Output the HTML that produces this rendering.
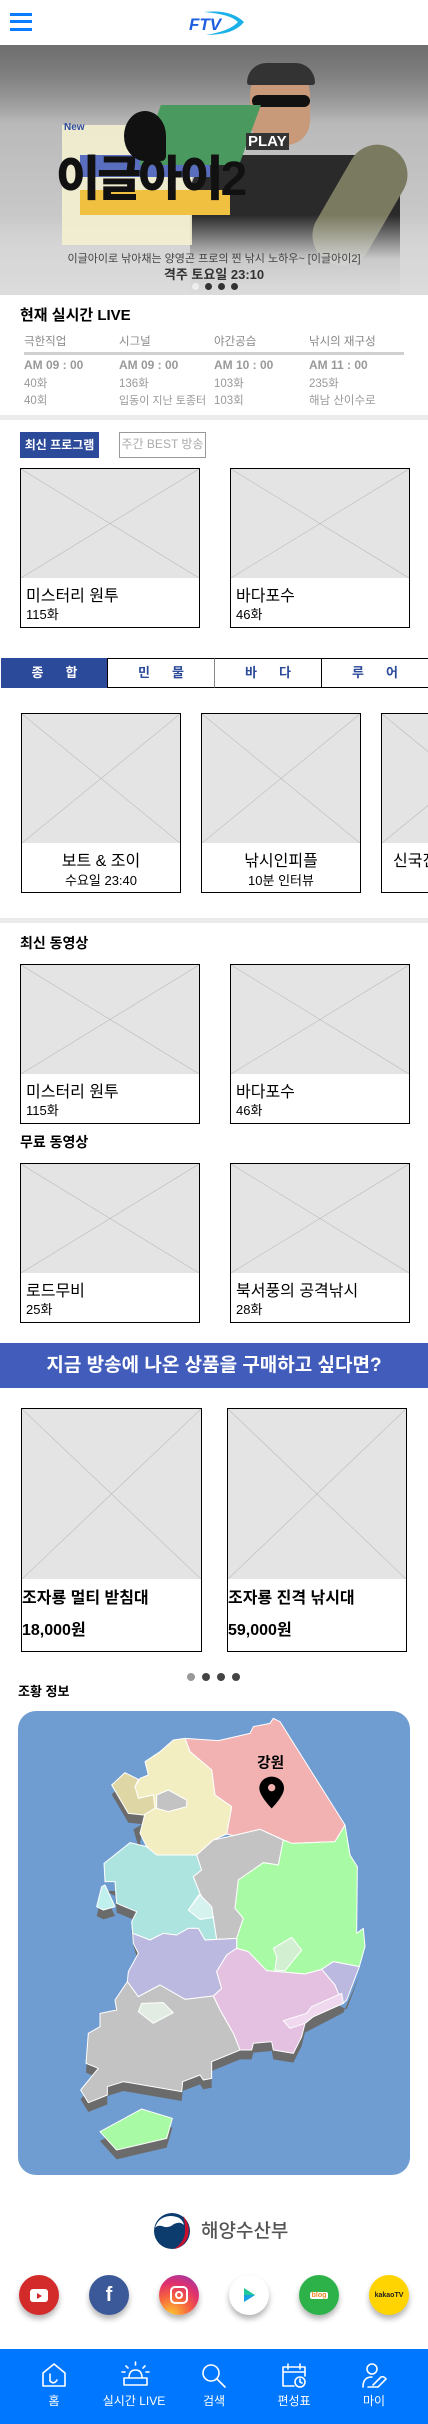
<!DOCTYPE html>
<html lang="ko"><head><meta charset="utf-8">
<style>
*{margin:0;padding:0;box-sizing:border-box}
html,body{width:428px;height:2424px;overflow:hidden}
body{position:relative;background:#fff;font-family:"Liberation Sans","Noto Sans CJK KR",sans-serif;color:#000}
#w{position:absolute;left:0;top:0;width:428px;height:2424px;overflow:hidden}
.a{position:absolute}
.card{position:absolute;border:1.5px solid #000;background:#fff;overflow:hidden}
.ph{position:absolute;left:0;top:0;right:0;background:#e4e4e4}
.ph svg{width:100%;height:100%;display:block}
.t1{position:absolute;font-size:16px;white-space:nowrap}
.t2{position:absolute;font-size:13px;white-space:nowrap}
.sec{position:absolute;font-size:14px;font-weight:bold;white-space:nowrap}
.tab{position:absolute;top:658px;height:30px;border:1.5px solid #000;font-size:13px;font-weight:bold;color:#2c4a9a;text-align:center;line-height:27px;letter-spacing:22px;text-indent:22px}
.lh{position:absolute;font-size:11.5px;color:#888;white-space:nowrap}
.lt{position:absolute;font-size:12px;font-weight:bold;color:#999;white-space:nowrap}
.lr{position:absolute;font-size:11.5px;color:#999;white-space:nowrap}
.soc{position:absolute;top:2275px;width:40px;height:40px;border-radius:50%;box-shadow:0 4px 6px rgba(0,0,0,.3);display:flex;align-items:center;justify-content:center}
.nav{position:absolute;top:2392px;font-size:12px;color:#fff;text-align:center;width:80px;white-space:nowrap}
</style></head><body><div id="w">

<!-- header -->
<div class="a" style="left:10px;top:13px;width:22px;height:3px;background:#0a7cff"></div>
<div class="a" style="left:10px;top:20px;width:22px;height:3px;background:#0a7cff"></div>
<div class="a" style="left:10px;top:28px;width:22px;height:3px;background:#0a7cff"></div>
<svg class="a" style="left:186px;top:9px" width="60" height="28" viewBox="0 0 60 28">
<path d="M18 3 Q45 0 58 13 Q48 26 20 26 Q44 22 52 13 Q44 5 18 3Z" fill="#1ab0e8"/>
<text x="3" y="21" font-family="Liberation Sans" font-weight="bold" font-style="italic" font-size="17" fill="#1d5fe0">FTV</text>
</svg>

<!-- hero -->
<div class="a" style="left:0;top:45px;width:428px;height:250px;background:linear-gradient(180deg,#8a8a8a 0%,#b9b9b9 30%,#c9c9c9 70%,#e0e0e0 100%);overflow:hidden">
<div class="a" style="left:0;top:0;width:428px;height:80px;background:linear-gradient(180deg,#6f6f6f,rgba(180,180,180,0))"></div>
<div class="a" style="left:190px;top:110px;width:210px;height:140px;background:#2a2a2a;border-radius:40px 40px 0 0"></div>
<div class="a" style="left:250px;top:20px;width:60px;height:80px;background:#c89a7a;border-radius:30px 30px 24px 24px"></div>
<div class="a" style="left:247px;top:18px;width:68px;height:22px;background:#333;border-radius:30px 30px 4px 4px"></div>
<div class="a" style="left:252px;top:50px;width:58px;height:12px;background:#111;border-radius:6px"></div>
<div class="a" style="left:330px;top:95px;width:60px;height:130px;background:#7a7a60;border-radius:30px;transform:rotate(30deg)"></div>
<div class="a" style="left:0;top:170px;width:428px;height:80px;background:linear-gradient(180deg,rgba(215,215,215,0),rgba(215,215,215,.92) 55%,#dcdcdc)"></div>
<div class="a" style="left:62px;top:80px;width:130px;height:120px;background:#f4f0d0;opacity:.9"></div>
<div class="a" style="left:80px;top:110px;width:130px;height:22px;background:#5a6ec0"></div>
<div class="a" style="left:80px;top:145px;width:150px;height:25px;background:#f0c040"></div>
<div class="a" style="left:150px;top:60px;width:100px;height:60px;background:#4a9a60;transform:skewX(-20deg)"></div>
<div class="a" style="left:124px;top:66px;width:42px;height:50px;background:#111;border-radius:50% 50% 10% 50%"></div>
<div class="a" style="left:246px;top:88px;font-size:15px;font-weight:bold;color:#fff;background:#333;padding:0 2px">PLAY</div>
<div class="a" style="left:64px;top:77px;font-size:10px;font-weight:bold;color:#2b4aa0">New</div>
<div class="a" style="left:56px;top:94px;font-size:48px;font-weight:900;color:#111;letter-spacing:-3px;white-space:nowrap">이글아이2</div>
<div class="a" style="left:0;top:205px;width:428px;text-align:center;font-size:11px;color:#444;white-space:nowrap">이글아이로 낚아채는 양영곤 프로의 찐 낚시 노하우~ [이글아이2]</div>
<div class="a" style="left:0;top:219px;width:428px;text-align:center;font-size:13px;font-weight:bold;color:#333">격주 토요일 23:10</div>
<div class="a" style="left:192px;top:238px;width:7px;height:7px;border-radius:50%;background:#eee"></div>
<div class="a" style="left:205px;top:238px;width:7px;height:7px;border-radius:50%;background:#333"></div>
<div class="a" style="left:218px;top:238px;width:7px;height:7px;border-radius:50%;background:#333"></div>
<div class="a" style="left:231px;top:238px;width:7px;height:7px;border-radius:50%;background:#333"></div>
</div>

<!-- live -->
<div class="a" style="left:20px;top:304px;font-size:15px;font-weight:bold">현재 실시간 LIVE</div>
<div class="lh" style="left:24px;top:333px">극한직업</div><div class="lh" style="left:119px;top:333px">시그널</div><div class="lh" style="left:214px;top:333px">야간공습</div><div class="lh" style="left:309px;top:333px">낚시의 재구성</div>
<div class="a" style="left:24px;top:352px;width:380px;height:3px;background:#d0d0d0"></div>
<div class="lt" style="left:24px;top:358px">AM 09 : 00</div><div class="lt" style="left:119px;top:358px">AM 09 : 00</div><div class="lt" style="left:214px;top:358px">AM 10 : 00</div><div class="lt" style="left:309px;top:358px">AM 11 : 00</div>
<div class="lr" style="left:24px;top:375px">40화</div><div class="lr" style="left:119px;top:375px">136화</div><div class="lr" style="left:214px;top:375px">103화</div><div class="lr" style="left:309px;top:375px">235화</div>
<div class="lr" style="left:24px;top:392px">40회</div><div class="lr" style="left:119px;top:392px;font-size:11px">입동이 지난 토종터</div><div class="lr" style="left:214px;top:392px">103회</div><div class="lr" style="left:309px;top:392px">해남 산이수로</div>
<div class="a" style="left:0;top:415px;width:428px;height:5px;background:#ebebeb"></div>

<!-- latest program -->
<div class="a" style="left:20px;top:432px;width:79px;height:26px;background:#2c4a9a;color:#fff;font-size:12px;font-weight:bold;text-align:center;line-height:26px">최신 프로그램</div>
<div class="a" style="left:119px;top:432px;width:87px;height:26px;border:1.5px solid #999;color:#aaa;font-size:12px;text-align:center;line-height:23px">주간 BEST 방송</div>

<svg width="0" height="0" style="position:absolute"><defs><symbol id="x" viewBox="0 0 100 100" preserveAspectRatio="none"><line x1="0" y1="0" x2="100" y2="100" stroke="#bbb" stroke-width="0.6" vector-effect="non-scaling-stroke"/><line x1="100" y1="0" x2="0" y2="100" stroke="#bbb" stroke-width="0.6" vector-effect="non-scaling-stroke"/></symbol></defs></svg>

<div class="card" style="left:20px;top:468px;width:180px;height:160px"><div class="ph" style="height:109px"><svg><use href="#x"/></svg></div><div class="t1" style="left:5px;top:113px">미스터리 원투</div><div class="t2" style="left:5px;top:135px">115화</div></div>
<div class="card" style="left:230px;top:468px;width:180px;height:160px"><div class="ph" style="height:109px"><svg><use href="#x"/></svg></div><div class="t1" style="left:5px;top:113px">바다포수</div><div class="t2" style="left:5px;top:135px">46화</div></div>

<!-- tabs -->
<div class="tab" style="left:1px;width:107px;background:#2c4a9a;color:#fff;border-color:#2c4a9a">종합</div>
<div class="tab" style="left:107px;width:108px">민물</div>
<div class="tab" style="left:214px;width:108px;border-left-color:#888">바다</div>
<div class="tab" style="left:321px;width:107px;border-right:none">루어</div>

<div class="a" style="left:0;top:710px;width:428px;height:186px;overflow:hidden">
<div class="card" style="left:21px;top:3px;width:160px;height:180px"><div class="ph" style="height:129px"><svg><use href="#x"/></svg></div><div class="t1" style="left:0;right:0;text-align:center;top:133px">보트 &amp; 조이</div><div class="t2" style="left:0;right:0;text-align:center;top:156px">수요일 23:40</div></div>
<div class="card" style="left:201px;top:3px;width:160px;height:180px"><div class="ph" style="height:129px"><svg><use href="#x"/></svg></div><div class="t1" style="left:0;right:0;text-align:center;top:133px">낚시인피플</div><div class="t2" style="left:0;right:0;text-align:center;top:156px">10분 인터뷰</div></div>
<div class="card" style="left:381px;top:3px;width:160px;height:180px"><div class="ph" style="height:129px"><svg><use href="#x"/></svg></div><div class="t1" style="left:11px;top:133px">신국진의</div></div>
</div>
<div class="a" style="left:0;top:918px;width:428px;height:5px;background:#ebebeb"></div>

<!-- videos -->
<div class="sec" style="left:20px;top:933px">최신 동영상</div>
<div class="card" style="left:20px;top:964px;width:180px;height:160px"><div class="ph" style="height:109px"><svg><use href="#x"/></svg></div><div class="t1" style="left:5px;top:113px">미스터리 원투</div><div class="t2" style="left:5px;top:135px">115화</div></div>
<div class="card" style="left:230px;top:964px;width:180px;height:160px"><div class="ph" style="height:109px"><svg><use href="#x"/></svg></div><div class="t1" style="left:5px;top:113px">바다포수</div><div class="t2" style="left:5px;top:135px">46화</div></div>
<div class="sec" style="left:20px;top:1132px">무료 동영상</div>
<div class="card" style="left:20px;top:1163px;width:180px;height:160px"><div class="ph" style="height:109px"><svg><use href="#x"/></svg></div><div class="t1" style="left:5px;top:113px">로드무비</div><div class="t2" style="left:5px;top:135px">25화</div></div>
<div class="card" style="left:230px;top:1163px;width:180px;height:160px"><div class="ph" style="height:109px"><svg><use href="#x"/></svg></div><div class="t1" style="left:5px;top:113px">북서풍의 공격낚시</div><div class="t2" style="left:5px;top:135px">28화</div></div>

<!-- banner -->
<div class="a" style="left:0;top:1343px;width:428px;height:45px;background:#425cbb;color:#fff;font-size:19px;font-weight:bold;text-align:center;line-height:45px">지금 방송에 나온 상품을 구매하고 싶다면?</div>

<div class="card" style="left:21px;top:1408px;width:181px;height:244px"><div class="ph" style="height:170px"><svg><use href="#x"/></svg></div><div class="t1" style="left:0;top:175px;font-weight:bold">조자룡 멀티 받침대</div><div class="t1" style="left:0;top:207px;font-weight:bold">18,000원</div></div>
<div class="card" style="left:227px;top:1408px;width:180px;height:244px"><div class="ph" style="height:170px"><svg><use href="#x"/></svg></div><div class="t1" style="left:0;top:175px;font-weight:bold">조자룡 진격 낚시대</div><div class="t1" style="left:0;top:207px;font-weight:bold">59,000원</div></div>
<div class="a" style="left:187px;top:1673px;width:8px;height:8px;border-radius:50%;background:#999"></div>
<div class="a" style="left:202px;top:1673px;width:8px;height:8px;border-radius:50%;background:#444"></div>
<div class="a" style="left:217px;top:1673px;width:8px;height:8px;border-radius:50%;background:#444"></div>
<div class="a" style="left:232px;top:1673px;width:8px;height:8px;border-radius:50%;background:#444"></div>
<div class="sec" style="left:18px;top:1681px;font-size:13px">조황 정보</div>

<!-- map -->
<div class="a" style="left:18px;top:1711px;width:392px;height:464px;background:#6f9dd1;border-radius:18px"></div>
<svg class="a" style="left:0;top:1680px" width="428" height="500" viewBox="0 0 1284 1500">
<g fill="#6b6b6b" transform="translate(0,28)">
<polygon points="335,315 375,278 415,298 405,320 415,355 460,345 465,385 430,405 385,400"/>
<polygon points="312,550 390,488 440,500 420,460 435,400 400,420 415,470 390,488"/>
<polygon points="290,680 305,620 315,615 345,680 310,690"/>
<polygon points="315,605 345,605 350,670 410,695 395,725 398,760 415,820 385,875 382,905 345,960 350,990 300,1000 300,1040 265,1060 258,1150 295,1165 242,1230 265,1268 322,1245 322,1220 370,1205 545,1235 548,1205 600,1185 610,1200 635,1195 635,1145 720,1110 755,1110 760,1090 815,1085 820,1110 880,1120 905,1070 915,1030 1030,970 1078,860 1095,800 1078,860 1040,960"/>
<polygon points="300,1355 425,1287 517,1315 500,1375 350,1410"/>
</g>
<g stroke="#fff" stroke-width="3" stroke-linejoin="round">
<polygon fill="#f2b2b2" points="555,175 655,182 750,160 760,140 810,130 820,115 840,125 1035,435 1005,485 875,490 850,480 780,448 700,467 680,462 695,380 645,345 635,270 570,215"/>
<polygon fill="#f2eec2" points="555,175 570,215 635,270 645,345 695,380 680,462 640,480 590,525 470,525 440,500 420,460 435,400 465,385 460,345 415,355 405,320 420,295 445,285 435,245 480,215 520,180"/>
<polygon fill="#c3c3c3" points="470,345 505,330 560,360 560,380 505,395 470,385"/>
<polygon fill="#dfd6a6" points="335,315 375,278 415,298 405,320 415,355 460,345 465,385 430,405 385,400"/>
<polygon fill="#aee4e0" points="390,488 440,500 470,525 590,525 605,570 580,590 600,640 565,690 600,718 640,712 650,778 615,780 595,745 565,745 530,765 490,760 450,780 398,760 395,725 410,695 350,670 345,605 315,605 312,550"/>
<polygon fill="#bff0ee" points="290,680 305,620 315,615 345,680 310,690"/>
<polygon fill="#c3c3c3" points="590,525 640,480 700,467 780,448 850,480 835,555 790,548 715,600 705,685 730,715 710,775 650,778 640,712 600,640 580,590 605,570"/>
<polygon fill="#a8fba4" points="850,480 875,490 1005,485 1035,435 1050,525 1072,560 1070,760 1090,745 1095,800 1078,860 1000,845 965,868 915,882 800,872 745,815 710,805 710,775 730,715 705,685 715,600 790,548 835,555"/>
<polygon fill="#bbb9e0" points="398,760 450,780 490,760 530,765 565,745 595,745 615,780 710,775 710,805 680,825 650,875 665,925 640,948 555,958 480,915 415,950 382,905 385,875 415,820 400,790"/>
<polygon fill="#e4c1e0" points="710,805 745,815 800,872 915,882 965,868 1005,915 1015,940 1030,970 940,1010 915,1030 905,1070 880,1120 820,1110 815,1085 760,1090 755,1110 720,1110 700,1060 660,990 640,948 665,925 650,875 680,825"/>
<polygon fill="#bbb9e0" points="965,868 1000,845 1078,860 1040,960 1030,970 1015,940 1005,915"/>
<polygon fill="#f0d8ee" points="935,980 1025,940 1030,970 940,1010 915,1030 870,1045 850,1022 920,1000"/>
<polygon fill="#c3c3c3" points="382,905 415,950 480,915 555,958 640,948 660,990 700,1060 720,1110 635,1145 635,1195 610,1200 600,1185 548,1205 545,1235 370,1205 322,1220 322,1245 265,1268 242,1230 295,1165 258,1150 265,1060 300,1040 300,1000 350,990 345,960"/>
<polygon fill="#a8fba4" points="300,1355 425,1287 517,1315 500,1375 350,1410"/>
<polygon fill="#d6f2ee" points="565,690 600,645 635,680 640,712 600,718"/>
<polygon fill="#d2efd2" points="820,805 875,772 905,810 855,872 825,870 830,830"/>
<polygon fill="#e3ece3" points="415,995 425,970 490,968 520,998 460,1030"/>
</g>
<text x="812" y="262" text-anchor="middle" font-size="44" font-weight="bold" font-family="Noto Sans CJK KR,sans-serif">강원</text>
<path d="M815 290 C795 290 778 305 778 325 C778 348 815 385 815 385 C815 385 852 348 852 325 C852 305 835 290 815 290Z" fill="#000"/>
<circle cx="815" cy="323" r="11" fill="#f2b2b2"/>
</svg>

<!-- ministry -->
<svg class="a" style="left:152px;top:2211px" width="40" height="40" viewBox="0 0 40 40">
<circle cx="20" cy="20" r="18" fill="#0c3b6e"/>
<path d="M3 17 Q6 6 18 5 Q30 5 32 14 Q28 10 22 13 Q16 18 10 15 Q5 14 3 17Z" fill="#fff"/>
<path d="M31 5 Q40 15 35 28 Q30 37 22 38 Q34 30 33 18 Q33 10 31 5Z" fill="#c8102e"/>
</svg>
<div class="a" style="left:201px;top:2216px;font-size:19px;color:#555;font-weight:500">해양수산부</div>

<!-- social -->
<div class="soc" style="left:19px;background:#d32a2a"><div style="width:18px;height:13px;background:#fff;border-radius:3px;position:relative"><div style="position:absolute;left:7px;top:4px;border-left:5px solid #d32a2a;border-top:3px solid transparent;border-bottom:3px solid transparent"></div></div></div>
<div class="soc" style="left:89px;background:#3b5998;color:#fff;font-weight:bold;font-size:20px">f</div>
<div class="soc" style="left:159px;background:radial-gradient(circle at 30% 100%,#fdc630,#f56040 40%,#e1306c 65%,#8a3ab9 100%)"><div style="width:18px;height:18px;border:2px solid #fff;border-radius:5px;position:relative"><div style="position:absolute;left:3px;top:3px;width:8px;height:8px;border:2px solid #fff;border-radius:50%"></div></div></div>
<div class="soc" style="left:229px;background:#fff"><svg width="16" height="16" viewBox="0 0 16 16"><path d="M3 1 L14 8 L3 15Z" fill="#20c997"/><path d="M3 8 L14 8 L3 15Z" fill="#1aa0e0"/></svg></div>
<div class="soc" style="left:299px;background:#2db24a"><div style="background:#fff;color:#f08a24;font-size:7px;font-weight:bold;padding:0 2px;border-radius:2px">blog</div></div>
<div class="soc" style="left:369px;background:#ffd400;font-size:7px;font-weight:bold;color:#222">kakaoTV</div>

<!-- bottom nav -->
<div class="a" style="left:0;top:2349px;width:428px;height:75px;background:#0077ff"></div>
<svg class="a" style="left:0;top:2360px" width="428" height="30" viewBox="0 0 428 30" fill="none" stroke="#fff" stroke-width="1.6" stroke-linecap="round" stroke-linejoin="round">
<path d="M43 13 L54 4 L65 13 L65 26 L43 26Z M50 14 L50 21 Q54 25 57 20"/>
<path d="M124 25 L147 25 L147 18 L124 18Z M129 18 Q129 10 135.5 10 Q142 10 142 18 M135.5 2 L135.5 5 M126 6 L128 8 M145 6 L143 8 M122 12 L125 12 M146 12 L149 12"/>
<circle cx="211" cy="13" r="8"/><path d="M217 19 L225 27"/>
<path d="M283 7 L305 7 L305 16 M283 7 L283 26 L294 26 M283 12 L305 12 M288 4 L288 9 M300 4 L300 9"/><circle cx="300" cy="22" r="5"/><path d="M300 19 L300 22 L302 23"/>
<circle cx="372" cy="9" r="5"/><path d="M363 27 Q363 17 372 17 M368 27 L378 27 L386 19 Q384 16 381 17 L373 25"/>
</svg>
<div class="nav" style="left:14px">홈</div>
<div class="nav" style="left:94px">실시간 LIVE</div>
<div class="nav" style="left:174px">검색</div>
<div class="nav" style="left:254px">편성표</div>
<div class="nav" style="left:334px">마이</div>
</div></body></html>
